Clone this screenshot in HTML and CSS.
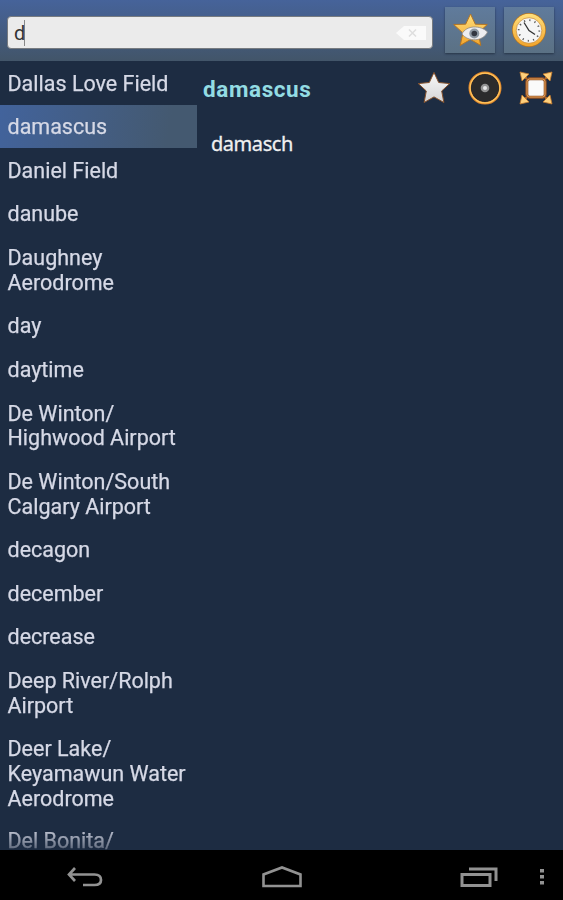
FILE: index.html
```html
<!DOCTYPE html>
<html lang="en">
<head>
<meta charset="utf-8">
<title>Dictionary</title>
<link rel="stylesheet" href="styles.css">
</head>
<body>
<div class="app">
  <header class="toolbar">
    <div class="search"><span class="query">d</span>
      <svg class="clear" width="32" height="16" viewBox="0 0 32 16"><path d="M1 8L9 1H31V15H9Z" fill="#fafafa"/><path d="M14 4.500l7 7M21 4.500l-7 7" stroke="#dedede" stroke-width="1.500"/></svg>
    </div>
    <div class="tool">
      <svg width="50" height="46" viewBox="0 0 50 46">
        <defs><linearGradient id="gold" x1="0" y1="0" x2="0" y2="1"><stop offset="0" stop-color="#ffdf7c"/><stop offset="1" stop-color="#f2a52c"/></linearGradient></defs>
        <path d="M25.500 7l4.800 10.200 12 .3-9.200 8.500 2.700 12.500-10.300-6-10.300 6 2.700-12.500-9.200-8.500 12-.3z" fill="url(#gold)" stroke="#b57522" stroke-width="1" stroke-linejoin="round"/>
        <path d="M17 27C21 18 36 18 42.500 25C38 35 23 35 17 27Z" fill="#eeeef0" stroke="#8f8a86" stroke-width=".8"/>
        <circle cx="29.300" cy="26.500" r="5" fill="#8d98a3"/><circle cx="29.300" cy="26.500" r="2.800" fill="#333741"/>
      </svg>
    </div>
    <div class="tool">
      <svg width="50" height="46" viewBox="0 0 50 46">
        <circle cx="25" cy="23" r="17" fill="#b57420"/><circle cx="25" cy="23" r="16.300" fill="url(#gold)"/>
        <circle cx="25" cy="23.500" r="12.800" fill="#f5f5f5" stroke="#c88830" stroke-width=".7"/>
        <circle cx="25" cy="23.500" r="10.300" fill="none" stroke="#555" stroke-width="1.800" stroke-dasharray="1.200 4.193"/>
        <path d="M20 15.500L25 23.500L31 27.500" fill="none" stroke="#333" stroke-width="1.300"/>
      </svg>
    </div>
  </header>
  <main class="content">
    <ul class="words">
      <li>Dallas Love Field</li>
      <li class="selected">damascus</li>
      <li>Daniel Field</li>
      <li>danube</li>
      <li>Daughney<br>Aerodrome</li>
      <li>day</li>
      <li>daytime</li>
      <li>De Winton/<br>Highwood Airport</li>
      <li>De Winton/South<br>Calgary Airport</li>
      <li>decagon</li>
      <li>december</li>
      <li>decrease</li>
      <li>Deep River/Rolph<br>Airport</li>
      <li>Deer Lake/<br>Keyamawun Water<br>Aerodrome</li>
      <li class="last">Del Bonita/</li>
    </ul>
    <section class="entry">
      <div class="entry-head">
        <h1>damascus</h1>
        <svg width="34" height="34" viewBox="0 0 34 34"><defs><linearGradient id="silver" x1="0" y1="0" x2="0" y2="1"><stop offset="0" stop-color="#f8f8f8"/><stop offset="1" stop-color="#d4d4d6"/></linearGradient></defs><path d="M17 1.500l4.700 10 11 1.100-8 7.400 2.200 11.500-9.900-5.600-9.900 5.600 2.200-11.500-8-7.400 11-1.100z" fill="url(#silver)" stroke="#86522c" stroke-width="1" stroke-linejoin="round"/></svg>
        <svg width="34" height="34" viewBox="0 0 34 34"><circle cx="17" cy="17" r="15.300" fill="#2b2b2c" stroke="#df872b" stroke-width="2.400"/><circle cx="17" cy="17" r="14.900" fill="none" stroke="#ffc65e" stroke-width="1.200"/><circle cx="17" cy="17" r="4.300" fill="#939393"/><circle cx="17" cy="17" r="2" fill="#e7e7e7"/></svg>
        <svg width="34" height="34" viewBox="0 0 34 34"><path d="M6 6l22 22M28 6L6 28" stroke="#bd722d" stroke-width="2"/><path d="M1 1l9 2-7 7zM33 1l-9 2 7 7zM1 33l9-2-7-7zM33 33l-9-2 7-7z" fill="#ffd07b" stroke="#c47a2c" stroke-width=".8"/><rect x="7.800" y="7.800" width="18.400" height="18.400" rx="3" fill="#fafafa" stroke="#8f4f24" stroke-width="3"/><rect x="8" y="8" width="18" height="18" rx="2.500" fill="none" stroke="#efa858" stroke-width="1"/></svg>
      </div>
      <p>damasch</p>
    </section>
  </main>
  <nav class="navbar">
    <svg class="back" width="38" height="24" viewBox="0 0 38 24"><path d="M9 3L3 9.500L9 16M3 9.500H28.500Q35 9.500 35 15Q35 20 28.500 20H17" fill="none" stroke="#929292" stroke-width="2.700"/></svg>
    <svg class="home" width="40" height="24" viewBox="0 0 40 24"><path d="M1.500 21V9.500L20 2.500L38.500 9.500V21Z" fill="none" stroke="#929292" stroke-width="2.600"/></svg>
    <svg class="recent" width="38" height="22" viewBox="0 0 38 22"><path d="M2 8.500H30V19.500H2ZM9 3H36V15" fill="none" stroke="#929292" stroke-width="3"/></svg>
    <svg class="more" width="6" height="18" viewBox="0 0 6 18"><path d="M1 1h4v3.500h-4zM1 7h4v3.500h-4zM1 13h4v3.500h-4z" fill="#929292"/></svg>
  </nav>
</div>
</body>
</html>
```
FILE: styles.css
```css
* { box-sizing: border-box; }
body { margin: 0; font-family: Roboto, sans-serif; background: #1d2c42; }
.app { width: 563px; height: 900px; display: flex; flex-direction: column; overflow: hidden; }
.toolbar { height: 61px; flex: none; padding: 7px 9px 0 7px; display: flex; align-items: flex-start; background: linear-gradient(#46639a, #425569); }
.search { width: 426px; height: 33px; margin: 9px 12px 0 0; padding: 0 5px 0 6px; display: flex; align-items: center; justify-content: space-between; background: #ebebeb; border: 1px solid #777b80; border-radius: 4px; }
.query { font-size: 20px; line-height: 26px; color: #343434; border-right: 1px solid #888; letter-spacing: -.8px; }
.tool { width: 50px; height: 46px; margin-right: 9px; background: linear-gradient(#607b9c, #5b7184); box-shadow: 0 1px 2px rgba(20, 30, 45, .6); }
.tool:last-child { margin-right: 0; }
.tool svg { display: block; }
.content { height: 789px; flex: none; display: flex; overflow: hidden; background: #1d2c42; }
.words { width: 197px; flex: none; height: 789px; margin: 0; padding: 0; list-style: none; overflow: hidden; -webkit-mask-image: linear-gradient(#000 765px, rgba(0, 0, 0, .35) 789px); mask-image: linear-gradient(#000 765px, rgba(0, 0, 0, .35) 789px); }
.words li { padding: 10.650px 0 8.250px 7.500px; font-size: 21.500px; line-height: 24.700px; white-space: nowrap; color: #d6d9e6; -webkit-text-stroke: .25px #d6d9e6; }
.words .selected { background: linear-gradient(100deg, #42639c, #445970 85%); }
.words .last { line-height: 22px; }
.entry { flex: 1; padding: 10px 10px 0 6px; }
.entry-head { display: flex; align-items: center; gap: 17px; }
h1 { flex: 1; margin: 0; padding-top: 2px; font-size: 22.500px; line-height: 32px; font-weight: 700; letter-spacing: .6px; color: #93dce3; }
.entry p { margin: 25px 0 0 8px; font-family: "Noto Sans", sans-serif; font-size: 20px; line-height: 28px; letter-spacing: -.45px; color: #f0f0f0; -webkit-text-stroke: .3px #f0f0f0; }
.navbar { height: 50px; flex: none; display: flex; align-items: center; background: #000; padding: 3px 0 0 66px; }
.home { margin-left: 158px; }
.recent { margin-left: 158px; }
.more { margin-left: 41px; }
```
